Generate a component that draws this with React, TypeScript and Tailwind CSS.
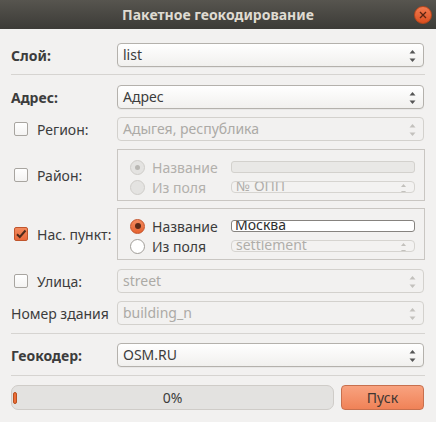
import React from "react";

const FONT = { fontFamily: '"Noto Sans", "DejaVu Sans", sans-serif' };

function Arrows({ disabled = false, small = false }: { disabled?: boolean; small?: boolean }) {
  const c = disabled ? "#c3c1bd" : "#555555";
  if (small) {
    return (
      <svg width="7" height="11" viewBox="0 0 7 11" className="absolute right-[7px] top-0">
        <path d="M1 5 L3.5 2 L6 5 Z" fill={c} />
        <path d="M1 9 L3.5 12 L6 9 Z" fill={c} />
      </svg>
    );
  }
  return (
    <svg width="7" height="14" viewBox="0 0 7 14" className="absolute right-[7px] top-[5px]">
      <path d="M0.5 4.5 L3.5 1 L6.5 4.5 Z" fill={c} />
      <path d="M0.5 9.5 L3.5 13 L6.5 9.5 Z" fill={c} />
    </svg>
  );
}

function Combo({ text, disabled = false }: { text: string; disabled?: boolean }) {
  return (
    <div
      className={
        "relative h-[24px] w-[307px] rounded-[4px] border pl-[5px] text-[14px] leading-[22px] " +
        (disabled
          ? "border-[#d3d1cd] bg-[#f2f1f0] text-[#acaaa6]"
          : "border-[#b4b1ac] bg-gradient-to-b from-[#ffffff] to-[#f1f0ee] text-[#3c3c3c] shadow-[0_1px_0_rgba(0,0,0,0.04)]")
      }
    >
      {text}
      <Arrows disabled={disabled} />
    </div>
  );
}

function SmallCombo({ text }: { text: string }) {
  return (
    <div className="relative h-[12px] w-[184px] overflow-hidden rounded-[4px] border border-[#d6d4d0] bg-[#f3f2f1] pl-[4px] text-[14px] leading-[14px] text-[#b0aeaa]">
      <div className="-mt-[3px]">{text}</div>
      <Arrows disabled small />
    </div>
  );
}

function SmallEdit({ text, disabled = false }: { text?: string; disabled?: boolean }) {
  return (
    <div
      className={
        "h-[12px] w-[184px] overflow-hidden rounded-[3px] border pl-[3px] text-[14px] leading-[14px] " +
        (disabled ? "border-[#d3d1cd] bg-[#e9e8e6]" : "border-[#86837f] bg-white text-[#2e2e2e]")
      }
    >
      <div className="-mt-[3px]">{text}</div>
    </div>
  );
}

function Check({ checked = false }: { checked?: boolean }) {
  if (checked) {
    return (
      <div className="flex h-[14px] w-[14px] items-center justify-center rounded-[2px] border border-[#c0552c] bg-gradient-to-b from-[#f28a5d] to-[#e9683a]">
        <svg width="12" height="12" viewBox="0 0 12 12">
          <path d="M2 6.2 L4.8 9 L10.5 2.5" stroke="#4d2b1c" strokeWidth="2" fill="none" />
        </svg>
      </div>
    );
  }
  return <div className="h-[14px] w-[14px] rounded-[2px] border border-[#a8a5a0] bg-gradient-to-b from-white to-[#f4f3f2]" />;
}

function Radio({ state }: { state: "on" | "off" | "don" | "doff" }) {
  if (state === "on") {
    return (
      <div className="flex h-[15px] w-[15px] items-center justify-center rounded-full border border-[#c4532a] bg-gradient-to-b from-[#f38a5e] to-[#e5622f]">
        <div className="h-[6px] w-[6px] rounded-full bg-[#5a2a18]" />
      </div>
    );
  }
  if (state === "off") {
    return <div className="h-[15px] w-[15px] rounded-full border border-[#a09d98] bg-white" />;
  }
  if (state === "don") {
    return (
      <div className="flex h-[15px] w-[15px] items-center justify-center rounded-full border border-[#cfcdc9] bg-[#e4e3e1]">
        <div className="h-[5px] w-[5px] rounded-full bg-[#b9b7b3]" />
      </div>
    );
  }
  return <div className="h-[15px] w-[15px] rounded-full border border-[#cfcdc9] bg-[#e4e3e1]" />;
}

function Sep() {
  return <div className="h-px w-[414px] bg-[#d6d4d1]" />;
}

function Row({ label, children, className = "" }: { label: React.ReactNode; children: React.ReactNode; className?: string }) {
  return (
    <div className={"flex items-center " + className}>
      <div className="w-[106px] shrink-0">{label}</div>
      {children}
    </div>
  );
}

function CheckLabel({ text, checked = false }: { text: string; checked?: boolean }) {
  return (
    <div className="flex items-center pl-[3px]">
      <Check checked={checked} />
      <span className="ml-[9px] text-[14px] text-[#3c3c3c]">{text}</span>
    </div>
  );
}

function Group({ disabled, r1, r2, edit, combo }: { disabled: boolean; r1: "on" | "don"; r2: "off" | "doff"; edit?: string; combo: string }) {
  const tc = disabled ? "text-[#b2b0ac]" : "text-[#3c3c3c]";
  return (
    <div className="flex h-[52px] w-[308px] flex-col gap-[8px] border border-[#c9c6c2] pl-[12px] pt-[11px]">
      <div className="flex h-[12px] items-center">
        <Radio state={r1} />
        <span className={"ml-[7px] w-[79px] text-[14px] " + tc}>Название</span>
        <SmallEdit text={edit} disabled={disabled} />
      </div>
      <div className="flex h-[12px] items-center">
        <Radio state={r2} />
        <span className={"ml-[7px] w-[79px] text-[14px] " + tc}>Из поля</span>
        <SmallCombo text={combo} />
      </div>
    </div>
  );
}

export default function App() {
  return (
    <div className="h-[422px] w-[436px] overflow-hidden bg-[#f2f1f0]" style={FONT}>
      <div className="relative flex h-[29px] items-center justify-center bg-gradient-to-b from-[#57554f] to-[#3c3b37]">
        <span className="text-[14px] font-bold text-[#dfdbd2]">Пакетное геокодирование</span>
        <div className="absolute right-[4px] top-[6px] flex h-[18px] w-[18px] items-center justify-center rounded-full border border-[#b8461c] bg-gradient-to-b from-[#f27a4f] to-[#dc4e1d]">
          <svg width="8" height="8" viewBox="0 0 8 8">
            <path d="M1 1 L7 7 M7 1 L1 7" stroke="#5a2412" strokeWidth="1.3" />
          </svg>
        </div>
      </div>
      <div className="flex flex-col pl-[11px]">
        <Row label={<span className="text-[14px] font-bold text-[#3c3c3c]">Слой:</span>} className="mt-[14px]">
          <Combo text="list" />
        </Row>
        <div className="mt-[7px]"><Sep /></div>
        <Row label={<span className="text-[14px] font-bold text-[#3c3c3c]">Адрес:</span>} className="mt-[10px]">
          <Combo text="Адрес" />
        </Row>
        <Row label={<CheckLabel text="Регион:" />} className="mt-[8px]">
          <Combo text="Адыгея, республика" disabled />
        </Row>
        <Row label={<CheckLabel text="Район:" />} className="mt-[8px]">
          <Group disabled r1="don" r2="doff" combo="№ ОПП" />
        </Row>
        <Row label={<CheckLabel text="Нас. пункт:" checked />} className="mt-[7px]">
          <Group disabled={false} r1="on" r2="off" edit="Москва" combo="settlement" />
        </Row>
        <Row label={<CheckLabel text="Улица:" />} className="mt-[9px]">
          <Combo text="street" disabled />
        </Row>
        <Row label={<span className="text-[14px] text-[#3c3c3c]">Номер здания</span>} className="mt-[8px]">
          <Combo text="building_n" disabled />
        </Row>
        <div className="mt-[8px]"><Sep /></div>
        <Row label={<span className="text-[14px] font-bold text-[#3c3c3c]">Геокодер:</span>} className="mt-[9px]">
          <Combo text="OSM.RU" />
        </Row>
        <div className="mt-[8px]"><Sep /></div>
        <div className="mt-[9px] flex items-center">
          <div className="relative flex h-[25px] w-[323px] items-center justify-center rounded-[7px] border border-[#cfccc8] bg-[#e3e2e0] text-[14px] text-[#3c3c3c]">
            <div className="absolute left-[1px] top-[6px] h-[12px] w-[4px] rounded-[2px] border border-[#b8501f] bg-[#ec6d37]" />
            0%
          </div>
          <div className="ml-[7px] flex h-[25px] w-[83px] items-center justify-center rounded-[4px] border border-[#c7704e] bg-gradient-to-b from-[#f8a27f] to-[#f08257] text-[14px] text-[#3f3632]">
            Пуск
          </div>
        </div>
      </div>
    </div>
  );
}
